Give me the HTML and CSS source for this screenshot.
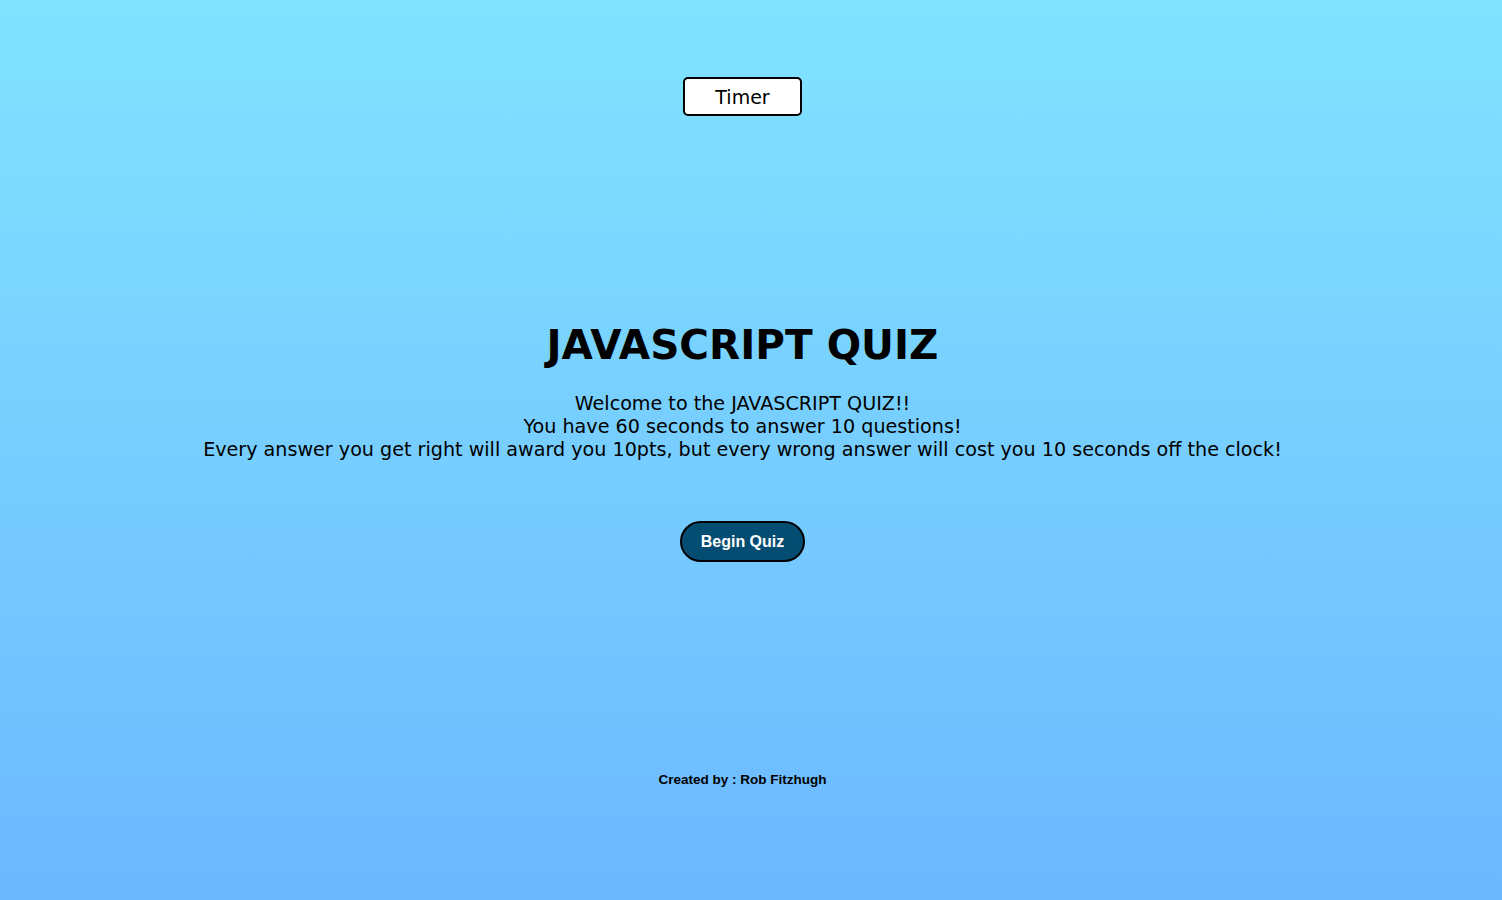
FILE: index.html
```html
<!DOCTYPE html>
<html lang="en">
<head>
<meta charset="utf-8">
<title>JavaScript Quiz</title>
<link rel="stylesheet" href="styles.css">
</head>
<body>
<div class="page">
  <header class="top">
    <button class="timer">Timer</button>
  </header>
  <main class="intro">
    <h1 class="title">JAVASCRIPT QUIZ</h1>
    <p class="desc">Welcome to the JAVASCRIPT QUIZ!!<br>You have 60 seconds to answer 10 questions!<br>Every answer you get right will award you 10pts, but every wrong answer will cost you 10 seconds off the clock!</p>
    <button class="begin">Begin Quiz</button>
  </main>
  <footer class="footer">Created by : Rob Fitzhugh</footer>
</div>
</body>
</html>
```
FILE: styles.css
```css
html, body {
  margin: 0;
  padding: 0;
}
body {
  width: 1502px;
  height: 900px;
  background: linear-gradient(to bottom, #81e3ff, #6cb8ff);
  font-family: "DejaVu Sans", Verdana, sans-serif;
  color: #000;
  overflow: hidden;
}
.page {
  display: flex;
  flex-direction: column;
  align-items: center;
  width: 1485px;
  height: 900px;
}
.top {
  padding-top: 77px;
  display: flex;
  justify-content: center;
}
.timer {
  width: 119px;
  height: 39px;
  background: #fff;
  border: 2px solid #000;
  border-radius: 5px;
  font-family: "DejaVu Sans", Verdana, sans-serif;
  font-size: 19px;
  color: #000;
  padding: 0;
}
.intro {
  display: flex;
  flex-direction: column;
  align-items: center;
  padding-top: 205px;
  text-align: center;
}
.title {
  margin: 0;
  font-size: 40.5px;
  font-weight: bold;
  line-height: 48px;
}
.desc {
  margin: 23px 0 0;
  font-size: 19.15px;
  line-height: 23px;
}
.begin {
  margin-top: 60px;
  width: 125px;
  height: 41px;
  background: #034d72;
  border: 2px solid #000;
  border-radius: 21px;
  color: #fff;
  font-family: "Liberation Sans", Arial, sans-serif;
  font-weight: bold;
  font-size: 16px;
  padding: 0;
}
.footer {
  margin-top: 210px;
  font-family: "Liberation Sans", Arial, sans-serif;
  font-weight: bold;
  font-size: 13.5px;
}
```
